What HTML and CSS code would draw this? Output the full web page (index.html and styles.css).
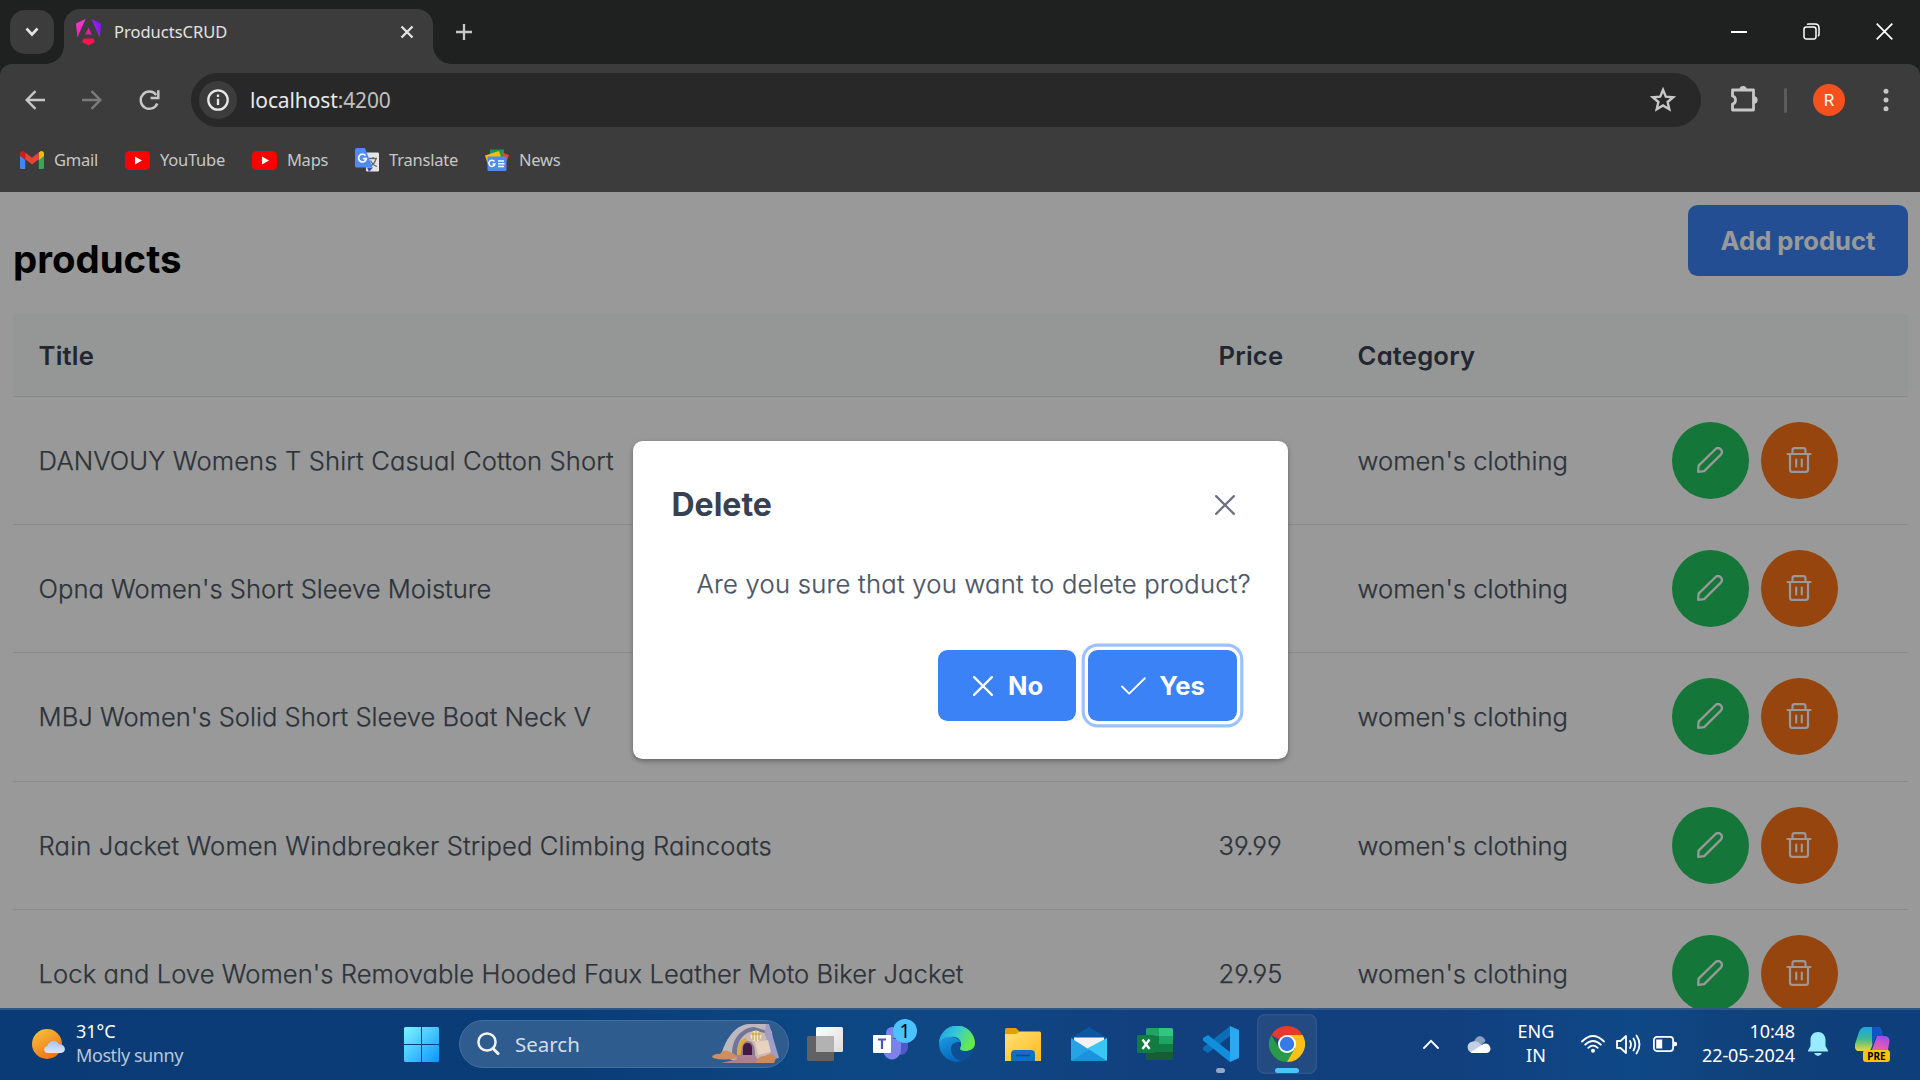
FILE: index.html
```html
<!DOCTYPE html>
<html lang="en">
<head>
<meta charset="utf-8">
<title>ProductsCRUD</title>
<link rel="stylesheet" href="styles.css">
</head>
<body>
<svg class="defs" aria-hidden="true">
  <symbol id="i-x" viewBox="0 0 20 20"><path d="M1.100 1.100l17.800 17.800M18.900 1.100L1.100 18.900" fill="none" stroke="currentColor" stroke-width="2.200" stroke-linecap="round"/></symbol>
  <symbol id="i-pencil" viewBox="0 0 26 26"><path d="M1.2 24.8L1.6 18.6L18.4 2.2C20 .7 22.200 .8 23.700 2.200C25.200 3.700 25.300 6 23.800 7.600L7.200 24.100Z" fill="none" stroke="currentColor" stroke-width="2.300" stroke-linejoin="round"/></symbol>
  <symbol id="i-trash" viewBox="0 0 26 26"><g fill="none" stroke="currentColor" stroke-width="2.200" stroke-linecap="round" stroke-linejoin="round"><path d="M1.500 7H24.500M6.500 7V3.200C6.500 2 7.300 1.200 8.600 1.200H17.400C18.700 1.200 19.500 2 19.500 3.200V7M4 7V22.500C4 24 4.800 24.900 6.400 24.900H19.600C21.200 24.900 22 24 22 22.500V7M10.200 12.500V19.500M15.800 12.500V19.500"/></g></symbol>
  <symbol id="i-yt" viewBox="0 0 25 19"><rect width="25" height="19" rx="4.500" fill="#f00"/><path d="M10 5.500L17 9.500L10 13.500Z" fill="#fff"/></symbol>
</svg>

<header class="browser">
  <div class="tabstrip">
    <div class="tab-search"><svg width="14" height="10" viewBox="0 0 14 10"><path d="M1.500 1.500L7 7.500L12.500 1.500" fill="none" stroke="#e3e3e3" stroke-width="2.600"/></svg></div>
    <div class="tab">
      <svg class="tab-icon" width="25" height="27" viewBox="0 0 25 27">
        <defs><linearGradient id="ang" x1="0" y1="1" x2="1" y2="0"><stop offset="0" stop-color="#d01fd8"/><stop offset=".5" stop-color="#9a1cf5"/><stop offset="1" stop-color="#6a12ff"/></linearGradient>
        <linearGradient id="angl" x1="0" y1="0" x2="0" y2="1"><stop offset="0" stop-color="#f637e3"/><stop offset="1" stop-color="#ff1fa0"/></linearGradient></defs>
        <path d="M0 4.500L9.500 0L1.400 18.500Z" fill="url(#angl)"/><path d="M25 4.500L15.500 0L23.600 18.500Z" fill="url(#ang)"/>
        <path d="M12.500 8.500L15.800 15.500H9.200Z" fill="#e0219f"/><path d="M7.500 19.500H17.500L18.800 23L12.500 26.500L6.200 23Z" fill="#ff1250"/>
      </svg>
      <span class="tab-title">ProductsCRUD</span>
      <svg class="tab-close" width="14" height="14" viewBox="0 0 14 14"><path d="M1.500 1.500l11 11M12.500 1.500l-11 11" stroke="#e3e3e3" stroke-width="2.400"/></svg>
    </div>
    <svg class="newtab" width="18" height="18" viewBox="0 0 18 18"><path d="M9 1V17M1 9H17" stroke="#c7c7c7" stroke-width="2.300"/></svg>
    <div class="winctl">
      <svg width="16" height="16" viewBox="0 0 16 16"><path d="M0 9H16" stroke="#fff" stroke-width="2"/></svg>
      <svg width="17" height="17" viewBox="0 0 17 17"><g fill="none" stroke="#fff" stroke-width="1.500"><rect x="1" y="4" width="12" height="12" rx="2.300"/><path d="M4 1.500C4.500 1 5 .9 6 .9H12C14.500 .9 16 2.500 16 5V11C16 12.200 15.600 12.800 15 13.200"/></g></svg>
      <svg width="17" height="17" viewBox="0 0 17 17"><path d="M.7 .7L16.300 16.300M16.300 .7L.7 16.300" stroke="#fff" stroke-width="1.700"/></svg>
    </div>
  </div>
  <div class="chrome-body">
    <div class="toolbar">
      <div class="nav">
        <svg width="20" height="20" viewBox="0 0 20 20"><path d="M20 10H2M10.500 1.200L1.700 10L10.500 18.800" fill="none" stroke="#c7c7c7" stroke-width="2.400"/></svg>
        <svg width="20" height="20" viewBox="0 0 20 20"><path d="M0 10H18M9.500 1.200L18.300 10L9.500 18.800" fill="none" stroke="#7b7b7b" stroke-width="2.400"/></svg>
        <svg width="21" height="21" viewBox="0 0 21 21"><path d="M18.300 13.500A8.600 8.600 0 1 1 17.200 5" fill="none" stroke="#c7c7c7" stroke-width="2.500"/><path d="M19.300 .3V8H11.600" fill="none" stroke="#c7c7c7" stroke-width="2.500"/></svg>
      </div>
      <div class="omnibox">
        <div class="siteinfo"><svg width="22" height="22" viewBox="0 0 22 22"><circle cx="11" cy="11" r="9.700" fill="none" stroke="#e8e8e8" stroke-width="2.300"/><path d="M11 9.800V16M11 5.600V8" stroke="#e8e8e8" stroke-width="2.300"/></svg></div>
        <span class="url">localhost<span class="port">:4200</span></span>
        <svg class="star" width="26" height="25" viewBox="0 0 26 25"><path d="M13 2.800L15.800 9.600L23.200 10.200L17.600 15L19.300 22.200L13 18.400L6.700 22.200L8.400 15L2.800 10.200L10.200 9.600Z" fill="none" stroke="#c7c7c7" stroke-width="2.400"/></svg>
      </div>
      <svg class="ext" width="28" height="28" viewBox="0 0 28 28"><path d="M3.500 5H23.500V25H2.500V19C4.500 18.500 5.500 17 5.500 15C5.500 13 4.500 11.500 2.500 11V5Z" fill="none" stroke="#c7c7c7" stroke-width="2.800" stroke-linejoin="round"/><path d="M9.500 4.500A3.600 3.600 0 0 1 16.700 4.500ZM24 11.300A3.600 3.600 0 0 1 24 18.500Z" fill="#c7c7c7"/></svg>
      <i class="sep"></i>
      <span class="avatar">R</span>
      <svg class="dots" width="6" height="24" viewBox="0 0 6 24"><g fill="#c7c7c7"><circle cx="3" cy="3.200" r="2.500"/><circle cx="3" cy="12" r="2.500"/><circle cx="3" cy="20.800" r="2.500"/></g></svg>
    </div>
    <nav class="bookmarks">
      <a><svg width="24" height="18" viewBox="0 0 24 18"><path d="M0 3V16.500Q0 18 1.500 18H5.200V7Z" fill="#4285f4"/><path d="M24 3V16.500Q24 18 22.500 18H18.800V7Z" fill="#34a853"/><path d="M18.800 1.500L21 0Q24 0 24 3V5L18.800 9Z" fill="#fbbc04"/><path d="M5.200 1.500L12 6.800L18.800 1.500V8.300L12 13.500L5.200 8.300Z" fill="#ea4335"/><path d="M0 3Q0 0 3 0L5.200 1.500V9L0 5Z" fill="#c5221f"/></svg><span>Gmail</span></a>
      <a><svg width="25" height="19"><use href="#i-yt"/></svg><span>YouTube</span></a>
      <a><svg width="25" height="19"><use href="#i-yt"/></svg><span>Maps</span></a>
      <a><svg width="24" height="24" viewBox="0 0 24 24"><rect x="11" y="4.500" width="13" height="19" rx="1.200" fill="#e4e4e4"/><path d="M14 10.500H22M18 9V10.500M21 10.500C20 15 17 17.500 14.500 18.500M15.500 12.500C17 16 19.500 17.500 22 18.500" stroke="#5f6b72" stroke-width="1.300" fill="none"/><path d="M12 19.500H18L14 24Z" fill="#3949ab"/><path d="M1.500 0H10L17.500 19.500H1.500Q0 19.500 0 18V1.500Q0 0 1.500 0Z" fill="#4c8bf5"/><path d="M10.500 7.600A3.900 3.900 0 1 0 11.300 10.600H7.800" stroke="#fff" stroke-width="1.700" fill="none"/></svg><span>Translate</span></a>
      <a><svg width="24" height="24" viewBox="0 0 24 24"><path d="M5 1.500H19V9H5Z" fill="#0f9d58"/><path d="M17 4.500L24 7L20 18Z" fill="#ea4335"/><path d="M0 7.500L14 3L17 12L3 17Z" fill="#fbbc04"/><rect x="2.500" y="8.500" width="19" height="14.500" rx="1.200" fill="#4c8bf5"/><path d="M9.500 13.500A3.100 3.100 0 1 0 10 16H7.500M13 13H19M13 15.700H19.500M13 18.500H19" stroke="#fff" stroke-width="1.500" fill="none"/></svg><span>News</span></a>
    </nav>
  </div>
</header>

<main class="page">
  <div class="page-head">
    <h1>products</h1>
    <button class="btn add">Add product</button>
  </div>
  <table class="grid">
    <colgroup><col class="c-title"><col class="c-price"><col class="c-cat"><col></colgroup>
    <thead><tr><th>Title</th><th>Price</th><th>Category</th><th></th></tr></thead>
    <tbody>
      <tr><td class="wide">DANVOUY Womens T Shirt Casual Cotton Short</td><td></td><td>women's clothing</td><td><div class="actions"><button class="round edit"><svg><use href="#i-pencil"/></svg></button><button class="round del"><svg><use href="#i-trash"/></svg></button></div></td></tr>
      <tr><td>Opna Women's Short Sleeve Moisture</td><td></td><td>women's clothing</td><td><div class="actions"><button class="round edit"><svg><use href="#i-pencil"/></svg></button><button class="round del"><svg><use href="#i-trash"/></svg></button></div></td></tr>
      <tr><td>MBJ Women's Solid Short Sleeve Boat Neck V</td><td></td><td>women's clothing</td><td><div class="actions"><button class="round edit"><svg><use href="#i-pencil"/></svg></button><button class="round del"><svg><use href="#i-trash"/></svg></button></div></td></tr>
      <tr><td class="wide">Rain Jacket Women Windbreaker Striped Climbing Raincoats</td><td>39.99</td><td>women's clothing</td><td><div class="actions"><button class="round edit"><svg><use href="#i-pencil"/></svg></button><button class="round del"><svg><use href="#i-trash"/></svg></button></div></td></tr>
      <tr><td class="mid">Lock and Love Women's Removable Hooded Faux Leather Moto Biker Jacket</td><td>29.95</td><td>women's clothing</td><td><div class="actions"><button class="round edit"><svg><use href="#i-pencil"/></svg></button><button class="round del"><svg><use href="#i-trash"/></svg></button></div></td></tr>
    </tbody>
  </table>
  <div class="mask">
    <section class="dialog" role="dialog">
      <div class="dialog-head"><h2>Delete</h2><svg class="dialog-close"><use href="#i-x"/></svg></div>
      <p class="dialog-msg">Are you sure that you want to delete product?</p>
      <div class="dialog-foot">
        <button class="btn no"><svg width="20" height="20"><use href="#i-x"/></svg><span>No</span></button>
        <button class="btn yes"><svg width="25" height="18" viewBox="0 0 25 18"><path d="M1 9.500L8.200 16.600L23.800 1.200" fill="none" stroke="#fff" stroke-width="1.900" stroke-linecap="round" stroke-linejoin="round"/></svg><span>Yes</span></button>
      </div>
    </section>
  </div>
</main>

<footer class="taskbar">
  <div class="weather">
    <svg width="34" height="31" viewBox="0 0 34 31"><defs><linearGradient id="sun" x1=".2" y1="0" x2=".8" y2="1"><stop offset="0" stop-color="#f6c03c"/><stop offset="1" stop-color="#f26a12"/></linearGradient><linearGradient id="cl" x1="0" y1="0" x2="0" y2="1"><stop offset="0" stop-color="#a9c3f0"/><stop offset="1" stop-color="#dbe6fa"/></linearGradient></defs><circle cx="15" cy="15" r="15" fill="url(#sun)"/><path d="M16 24C11 24 11 17.500 15.500 17C16.500 11.500 24.500 10 27 15.500C34.500 15 34.500 24 29 24Z" fill="url(#cl)"/></svg>
    <div class="weather-text"><span class="deg">31°C</span><span class="cond">Mostly sunny</span></div>
  </div>
  <div class="app"><svg width="35" height="35" viewBox="0 0 35 35"><defs><linearGradient id="win" x1="0" y1="0" x2="1" y2="1"><stop offset="0" stop-color="#7df4ff"/><stop offset="1" stop-color="#0a96ff"/></linearGradient></defs><path d="M1.500 0H17V17H0V1.500Q0 0 1.500 0ZM18 0H33.500Q35 0 35 1.500V17H18ZM0 18H17V35H1.500Q0 35 0 33.500ZM18 18H35V33.500Q35 35 33.500 35H18Z" fill="url(#win)"/></svg></div>
  <div class="search">
    <svg width="23" height="24" viewBox="0 0 23 24"><circle cx="10" cy="10" r="8.600" fill="none" stroke="#f2f2f2" stroke-width="2.500"/><path d="M16 16.500L21 21.500" stroke="#f2f2f2" stroke-width="3" stroke-linecap="round"/></svg>
    <span>Search</span>
    <svg class="hut" width="68" height="40" viewBox="0 0 68 40">
      <path d="M9 31C13 17 22 1 37 0H55L60 8L62 36H20Z" fill="#bdb8bb"/>
      <path d="M20 29C20 15 29 4 42 3L55 7L60 36H26Z" fill="#6f769a"/>
      <path d="M54 0H57L67 34L58 36L53 8Z" fill="#a29dc8"/>
      <path d="M25 31C24 17 32 8 42 7L53 9L59 33L34 37Z" fill="#cbb7b4"/>
      <path d="M43 18L56 16L59 28L46 31Z" fill="#e8d2bd"/>
      <path d="M25 31C25 20 29 15 34 14L36 18C31 20 29 24 29 31Z" fill="#dba63c"/><path d="M29 31C29 22 32 17 36 17C41 18 43 22 43 31Z" fill="#8a7a93"/>
      <path d="M31 31V24Q31 19 35.500 19Q40 19 40 24V31Z" fill="#431843"/>
      <circle cx="44" cy="12" r="5.500" fill="#f0e6c4"/><path d="M39 10H49M41 8V16M44 7V17M47 8V16" stroke="#c39a35" stroke-width="1"/>
      <path d="M24 31H43L48 39H9L26 35Z" fill="#b07f8e"/>
      <path d="M0 32Q5 29 8 30Q12 24 18 28Q25 31 26 34Q12 37 1 34Z" fill="#cf8d60"/><path d="M44 38Q47 31 53 32Q60 27 64 34L62 39H44Z" fill="#cf8a57"/>
    </svg>
  </div>
  <div class="app first"><svg width="36" height="34" viewBox="0 0 36 34"><defs><linearGradient id="tv" x1="0" y1="0" x2="1" y2="1"><stop offset="0" stop-color="#fff"/><stop offset="1" stop-color="#dcdcdc"/></linearGradient></defs><rect y="9" width="27" height="25" rx="1.500" fill="#626262"/><rect x="9" width="27" height="25" rx="1.500" fill="url(#tv)"/><path d="M9 9H27V25H9Z" fill="#b2b2b2"/></svg></div>
  <div class="app teams"><svg width="36" height="34" viewBox="0 0 36 34"><circle cx="19" cy="6" r="6" fill="#7b83eb"/><path d="M24 13H35V21A8 8 0 0 1 26 28Z" fill="#5059c9"/><path d="M13 12H28V23A9 10 0 0 1 11 27Z" fill="#7b83eb"/><rect y="8" width="18" height="18" rx="1" fill="#fff"/><path d="M5 12.500H13M9 12.500V22" stroke="#4b53bc" stroke-width="2.200"/></svg><span class="badge">1</span></div>
  <div class="app"><svg width="36" height="36" viewBox="0 0 36 36"><defs><linearGradient id="e1" x1="0" y1="0" x2="1" y2=".4"><stop offset="0" stop-color="#1b9de2"/><stop offset=".5" stop-color="#35c8d8"/><stop offset="1" stop-color="#66eb4a"/></linearGradient><linearGradient id="e2" x1="0" y1="0" x2=".4" y2="1"><stop offset="0" stop-color="#1b9de2"/><stop offset="1" stop-color="#0568bd"/></linearGradient></defs><path d="M18 12L22 24H35.500C32 31 26 36 18 36A18 18 0 0 1 8 30Z" fill="#0d4f96"/><path d="M0 18A18 18 0 0 1 36 17C36 23 31 25 26 25C21 25 20 23 22 20C23 14 18 10 12 11C6 11.500 1 15 0 18Z" fill="url(#e1)"/><path d="M0 18C1 13 7 10 13 11C19 12 22 15 22 17C20 15 12 16 12 23C12 30 18 35 23 35A18 18 0 0 1 0 18Z" fill="url(#e2)"/></svg></div>
  <div class="app"><svg width="36" height="33" viewBox="0 0 36 33"><defs><linearGradient id="fo" x1="0" y1="0" x2="1" y2="1"><stop offset="0" stop-color="#ffe07a"/><stop offset="1" stop-color="#fdbb1c"/></linearGradient></defs><path d="M0 1.500Q0 0 1.500 0H11L15 4V10H0Z" fill="#e0a000"/><path d="M0 6H11L15 3.500H34.500Q36 3.500 36 5V33H0Z" fill="url(#fo)"/><path d="M6 33V26Q6 22 10 22H26Q30 22 30 26V33Z" fill="#0c71c3"/><path d="M11 27.500H25" stroke="#0a4a86" stroke-width="1.600"/></svg></div>
  <div class="app"><svg width="36" height="34" viewBox="0 0 36 34"><path d="M0 11L18 0L36 11V20H0Z" fill="#0b57a4"/><path d="M3 10.500H33V25H3Z" fill="#f3f3f3"/><path d="M0 11L36 34H1.500Q0 34 0 32.500Z" fill="#27a3e4"/><path d="M36 11V32.500Q36 34 34.500 34L16 21.500Z" fill="#3cc6f4"/><path d="M0 34L18 22.500L36 34Z" fill="#1c92dc"/></svg></div>
  <div class="app"><svg width="36" height="33" viewBox="0 0 36 33"><path d="M9 1.500Q9 0 10.500 0H22V8H9Z" fill="#21a366"/><path d="M22 0H34.500Q36 0 36 1.500V8H22Z" fill="#33c481"/><path d="M9 8H22V24H9Z" fill="#107c41"/><path d="M22 8H36V16H22Z" fill="#21a366"/><path d="M22 16H36V24H22Z" fill="#107c41"/><path d="M9 24H36V30.500Q36 32 34.500 32H10.500Q9 32 9 30.500Z" fill="#185c37"/><rect y="7" width="18" height="18" rx="1.500" fill="#107c41"/><path d="M5.500 11.500L12.500 21M12.500 11.500L5.500 21" stroke="#fff" stroke-width="2.300"/></svg></div>
  <div class="app vs"><svg width="36" height="36" viewBox="0 0 36 36"><path d="M27 0V10L5 27L0 24V21.500Z" fill="#0b6fb5"/><path d="M27 36V26L5 9L0 12V14.500Z" fill="#1090dc"/><path d="M27 0L36 4V32L27 36Z" fill="#2aa9f3"/></svg><i class="run"></i></div>
  <div class="app active"><svg width="36" height="36" viewBox="0 0 36 36"><path d="M18 18L2.400 9A18 18 0 0 1 33.600 9Z" fill="#e33b2e"/><path d="M18 18L18 9H33.600A18 18 0 0 1 18 36Z" fill="#fbc116"/><path d="M18 18L25.800 22.500L18 36A18 18 0 0 1 2.400 9L10.200 22.500Z" fill="#2a9a48"/><circle cx="18" cy="18" r="9" fill="#fff"/><circle cx="18" cy="18" r="7.200" fill="#357be8"/></svg><i class="run on"></i></div>
  <div class="tray">
    <svg class="chev" width="16" height="10" viewBox="0 0 16 10"><path d="M1 9L8 1.800L15 9" fill="none" stroke="#fff" stroke-width="1.900" stroke-linecap="round"/></svg>
    <svg class="cloud" width="24" height="17" viewBox="0 0 24 17"><path d="M7 6C9-2 17-1 18.500 5L12 11Z" fill="#8ba2c4"/><path d="M5 16.500C-1 16-1 6 6 5.500C9 4.500 12 6 13 8L22 12Z" fill="#c4d0e2"/><path d="M3.500 16.300L15 9Q18 6.500 21.500 8.500Q24 11 23.500 13.500Q22.500 17 19 17H5Q4 17 3.500 16.300Z" fill="#fff"/></svg>
    <div class="lang"><span>ENG</span><span>IN</span></div>
    <svg class="wifi" width="24" height="18" viewBox="0 0 24 18"><g fill="none" stroke="#fff" stroke-width="1.800" stroke-linecap="round"><path d="M1 6.500Q12-4.500 23 6.500M4.200 9.700Q12 2.200 19.800 9.700M7.300 12.800Q12 8.400 16.700 12.800"/></g><circle cx="12" cy="15.800" r="2" fill="#fff"/></svg>
    <svg class="vol" width="25" height="21" viewBox="0 0 25 21"><g fill="none" stroke="#fff" stroke-width="1.800" stroke-linecap="round" stroke-linejoin="round"><path d="M1 7H4.500L10 2V19L4.500 14H1ZM14 7Q16 10.500 14 14M17.500 4.500Q21 10.500 17.500 16.500M20.500 1.500Q26.500 10.500 20.500 19.500"/></g></svg>
    <svg class="bat" width="24" height="16" viewBox="0 0 24 16"><rect x=".9" y=".9" width="19.200" height="14.200" rx="3" fill="none" stroke="#fff" stroke-width="1.800"/><rect x="3.200" y="3.500" width="6" height="9" fill="#fff"/><path d="M21 5.500L24 6.500V9.500L21 10.500Z" fill="#fff"/></svg>
    <div class="clock"><span class="time">10:48</span><span class="date">22-05-2024</span></div>
    <svg class="bell" width="20" height="24" viewBox="0 0 20 24"><path d="M10 0C14.500 0 17.500 3.500 17.500 8V14L20 18.500V19.500H0V18.500L2.500 14V8C2.500 3.500 5.500 0 10 0ZM6 21H14Q12.500 24 10 24Q7.500 24 6 21Z" fill="#99ebff"/></svg>
    <div class="copilot"><svg width="35" height="35" viewBox="0 0 35 35"><defs><linearGradient id="cp1" x1="0" y1="0" x2="0" y2="1"><stop offset="0" stop-color="#1aa5e8"/><stop offset=".5" stop-color="#3fb98f"/><stop offset="1" stop-color="#e9d93a"/></linearGradient><linearGradient id="cp2" x1=".6" y1="0" x2=".4" y2="1"><stop offset="0" stop-color="#9b4df0"/><stop offset=".6" stop-color="#e65ab0"/><stop offset="1" stop-color="#ff7a59"/></linearGradient></defs><path d="M10 0H23Q25.500 0 26.500 4L27.500 9H22Q20 9 19 13L16 22Q15 24 13 24H4Q-1 24 0 17L4 5Q6 0 10 0Z" fill="url(#cp1)"/><path d="M17 0H23Q25.500 0 26.500 4L27.500 9H22Q20 9 19 13L17 18Z" fill="#1552c8"/><path d="M22 9H30Q36 10 34 17L32 28H13Q16 26 18 20Z" fill="url(#cp2)"/></svg><span>PRE</span></div>
  </div>
</footer>
</body>
</html>
```
FILE: styles.css
```css
* { box-sizing: border-box; }
body { margin: 0; width: 1920px; height: 1080px; overflow: hidden; display: flex; flex-direction: column; background: #fff; font-family: "Noto Sans", sans-serif; }
svg { display: block; flex: none; }
.defs { position: absolute; width: 0; height: 0; }
button { border: 0; padding: 0; font: inherit; }

/* browser window */
.browser { background: #1f2120; height: 192px; flex: none; }
.tabstrip { height: 64px; display: flex; align-items: flex-start; padding-left: 10px; }
.tab-search { width: 44px; height: 44px; margin-top: 10px; border-radius: 15px; background: #3c3c3c; display: grid; place-items: center; }
.tab { position: relative; width: 369px; height: 55px; margin: 9px 0 0 10px; border-radius: 16px 16px 0 0; background: #3c3c3c; display: flex; align-items: center; padding: 0 19px 9px 12px; }
.tab::before, .tab::after { content: ""; position: absolute; bottom: 0; width: 18px; height: 18px; }
.tab::before { left: -18px; background: radial-gradient(circle at 0 0, transparent 17.500px, #3c3c3c 18px); }
.tab::after { right: -18px; background: radial-gradient(circle at 100% 0, transparent 17.500px, #3c3c3c 18px); }
.tab-title { margin: -1px 0 0 13px; flex: 1; color: #e3e3e3; font-size: 16.500px; }
.newtab { margin: 23px 0 0 22px; }
.winctl { margin: 23px 27px 0 auto; display: flex; gap: 56px; }
.chrome-body { height: 128px; background: #3c3c3c; border-radius: 12px 12px 0 0; }
.toolbar { height: 72px; display: flex; align-items: center; }
.nav { width: 191px; display: flex; gap: 37px; padding-left: 25px; }
.omnibox { width: 1510px; height: 54px; border-radius: 27px; background: #282828; display: flex; align-items: center; padding: 0 25px 0 8px; }
.siteinfo { width: 38px; height: 38px; border-radius: 50%; background: #3c3c3c; display: grid; place-items: center; }
.url { margin-left: 13px; flex: 1; font-size: 21px; color: #e8e8e8; letter-spacing: -.12px; }
.port { color: #c0c0c0; }
.star { margin-bottom: 2px; }
.ext { margin-left: 29px; margin-bottom: 2px; }
.sep { width: 3px; height: 25px; margin-left: 26px; border-radius: 2px; background: #5c5c5c; }
.avatar { width: 32px; height: 32px; margin-left: 26px; border-radius: 50%; background: #f4511e; color: #fff; font: 17px/32px Roboto, sans-serif; text-align: center; }
.dots { margin-left: 38px; }
.bookmarks { height: 56px; display: flex; align-items: center; padding: 0 0 8px 20px; gap: 26.800px; color: #c7c7c7; font-size: 16.500px; letter-spacing: -.22px; }
.bookmarks a { display: flex; align-items: center; gap: 10px; }
.bookmarks span { margin-top: -2px; }

/* products page */
.page { position: relative; height: 816px; flex: none; overflow: hidden; padding: 0 12px 0 13px; font-family: Inter, sans-serif; font-feature-settings: "cv02", "cv03", "cv04", "cv11"; }
.page-head { height: 122px; display: flex; justify-content: space-between; padding-top: 13px; }
h1 { margin: 30px 0 0; font-size: 38.400px; line-height: 48px; font-weight: 700; color: #000; font-feature-settings: normal; }
.btn { height: 71px; border-radius: 9.600px; background: #3b82f6; color: #fff; font-size: 25.600px; font-weight: 700; display: flex; align-items: center; justify-content: center; font-feature-settings: normal; }
.add { width: 220px; }
.grid { width: 1895px; table-layout: fixed; border-collapse: separate; border-spacing: 0; font-size: 25.600px; color: #4b5563; }
.c-title { width: 1180px; }
.c-price { width: 139px; }
.c-cat { width: 314px; }
th { height: 83px; padding: 0 25.600px; text-align: left; font-weight: 600; letter-spacing: .2px; color: #374151; background: #f9fafb; border-bottom: 1px solid #e5e7eb; }
td { height: 128.200px; padding: 0 25.600px; font-weight: 300; -webkit-text-stroke: .25px currentColor; border-bottom: 1px solid #e5e7eb; white-space: nowrap; }
.wide { letter-spacing: .13px; }
.mid { letter-spacing: .04px; }
.actions { display: flex; gap: 12px; }
.round { width: 77px; height: 77px; border-radius: 50%; color: #fff; display: grid; place-items: center; }
.round svg { width: 26px; height: 26px; margin-top: -1px; }
.edit { background: #22c55e; }
.del { background: #f97316; }

.mask { position: absolute; inset: 0; background: rgba(0, 0, 0, .4); display: flex; align-items: center; justify-content: center; }
.dialog { width: 655px; height: 318px; border-radius: 9.600px; background: #fff; color: #4b5563; box-shadow: 0 2px 5px rgba(0, 0, 0, .35); padding: 37px 38px 0 39px; }
.dialog-head { height: 53px; display: flex; align-items: center; justify-content: space-between; padding-right: 15px; }
h2 { margin: 0; font-size: 32px; font-weight: 700; color: #374151; }
.dialog-close { width: 20px; height: 20px; color: #6b7280; }
.dialog-msg { margin: 34px 0 0 25px; font-size: 25.600px; line-height: 38px; font-weight: 300; -webkit-text-stroke: .25px currentColor; letter-spacing: .25px; white-space: nowrap; }
.dialog-foot { display: flex; justify-content: flex-end; gap: 12px; margin-top: 47px; padding-right: 13px; }
.no { width: 138px; gap: 15px; padding-left: 3px; }
.yes { width: 149px; gap: 13px; padding-left: 2px; box-shadow: 0 0 0 3.200px #fff, 0 0 0 6.400px #9dc1fb; }

/* taskbar */
.taskbar { height: 72px; flex: none; display: flex; align-items: center; padding-bottom: 2px; border-top: 2px solid #2f5684; background: linear-gradient(90deg, #0a3b76 0, #0a3c78 30%, #0c4783 42%, #0f4784 50%, #123f7e 60%, #123f7e 75%, #0f4886 85%, #104079 92%, #0e3f7c 100%); color: #fff; font-size: 18px; }
.weather { width: 388px; padding-left: 32px; display: flex; align-items: center; gap: 10px; }
.weather-text, .clock, .lang { display: flex; flex-direction: column; line-height: 24px; margin-top: -2px; }
.cond { color: #b9c7db; letter-spacing: -.42px; }
.app { position: relative; width: 66px; height: 60px; display: grid; place-items: center; flex: none; }
.first { margin-left: 3px; }
.search { width: 330px; height: 48px; margin-left: 5px; border-radius: 24px; background: #2f5c8f; border: 1.500px solid #456f9f; display: flex; align-items: center; padding: 0 8px 0 17px; flex: none; }
.search span { margin-left: 15px; flex: 1; font-size: 20.500px; color: #d3deea; }
.badge { position: absolute; left: 35px; top: 5px; width: 24px; height: 24px; border-radius: 50%; background: #4cc2ff; color: #000; font-size: 19px; line-height: 24px; text-align: center; }
.run { position: absolute; bottom: 1px; left: 28px; width: 9px; height: 5px; border-radius: 3px; background: #93a6c4; }
.run.on { left: 18px; width: 24px; background: #4cc2ff; }
.active { width: 60px; margin-left: 3px; border-radius: 8px; background: #234b82; box-shadow: inset 0 0 0 1.500px #2e5589; }
.tray { flex: 1; display: flex; align-items: center; padding-left: 106px; }
.cloud { margin-left: 28px; }
.lang { width: 60px; margin-left: 15px; text-align: center; }
.wifi { margin-left: 15px; }
.vol { margin-left: 11px; }
.bat { margin-left: 12px; }
.clock { width: 118px; text-align: right; letter-spacing: -.1px; }
.bell { margin-left: 13px; }
.copilot { position: relative; margin-left: 27px; }
.copilot span { position: absolute; left: 8px; top: 23px; width: 27px; height: 12px; border-radius: 3px; background: #ffc400; color: #000; font-size: 10px; font-weight: 700; line-height: 12px; text-align: center; }
```
